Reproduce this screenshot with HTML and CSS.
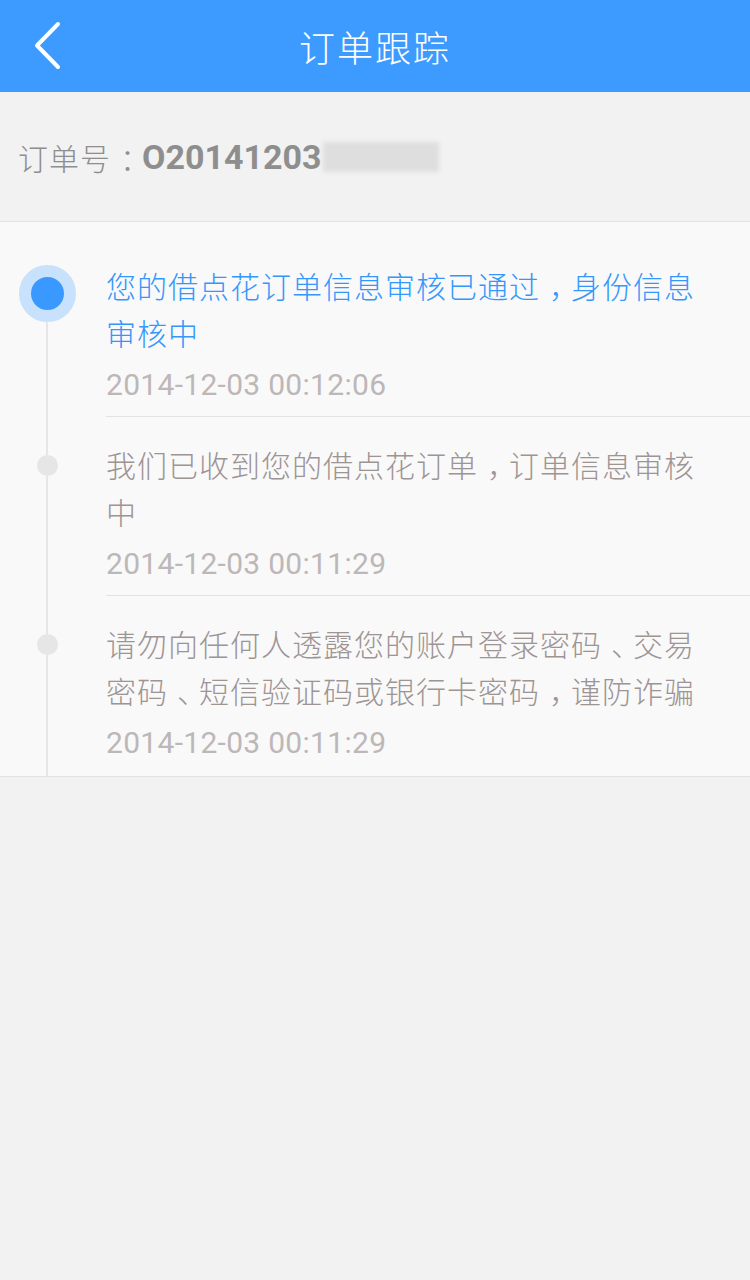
FILE: index.html
```html
<!DOCTYPE html>
<html lang="zh-CN">
<head>
    <meta charset="UTF-8">
    <title>订单跟踪</title>
    <link rel="stylesheet" href="styles.css">
</head>
<body>
    <div class="top-bar">
        <a class="back" href="#">
            <svg width="30" height="50" viewBox="0 0 30 50">
                <path d="M25 3 L4 24.5 L25 46" fill="none" stroke="#fff" stroke-width="4" stroke-linecap="round" stroke-linejoin="round"/>
            </svg>
        </a>
        <h1>订单跟踪</h1>
    </div>

    <div class="order-no">
        <span class="label">订单号<span class="pt">：</span></span><span class="num">O20141203</span><span class="blur"></span>
    </div>

    <div class="track-list">
        <div class="track-item current">
            <div class="gutter"><i class="dot"></i></div>
            <div class="track-body">
                <p class="msg">您的借点花订单信息审核已通过<span class="pt">，</span>身份信息<br>审核中</p>
                <p class="time">2014-12-03 00:12:06</p>
            </div>
        </div>
        <div class="track-item">
            <div class="gutter"><i class="dot"></i></div>
            <div class="track-body">
                <p class="msg">我们已收到您的借点花订单<span class="pt">，</span>订单信息审核<br>中</p>
                <p class="time">2014-12-03 00:11:29</p>
            </div>
        </div>
        <div class="track-item last">
            <div class="gutter"><i class="dot"></i></div>
            <div class="track-body">
                <p class="msg">请勿向任何人透露您的账户登录密码<span class="pt">、</span>交易<br>密码<span class="pt">、</span>短信验证码或银行卡密码<span class="pt">，</span>谨防诈骗</p>
                <p class="time">2014-12-03 00:11:29</p>
            </div>
        </div>
    </div>
</body>
</html>
```

FILE: styles.css
```css
body {
    margin: 0;
    background: #f2f2f2;
    font-family: Roboto, "Noto Sans CJK SC", sans-serif;
}

/* 全角标点：半宽字形 + 左右留白，看起来居中 */
.pt {
    font-feature-settings: "halt";
    padding: 0 6px 0 9px;
}

.top-bar {
    height: 92px;
    background: #3d9bff;
    display: flex;
    align-items: center;
    justify-content: center;
    position: relative;
}

.top-bar h1 {
    margin: 0;
    color: #fff;
    font-size: 36px;
    font-weight: 300;
    letter-spacing: 2px;
}

.back {
    position: absolute;
    left: 33px;
    top: 21px;
    display: block;
    width: 30px;
    height: 50px;
}

.order-no {
    height: 129px;
    display: flex;
    align-items: center;
    padding-left: 18px;
    border-bottom: 1px solid #e2e2e2;
    color: #8e8e8e;
    white-space: nowrap;
}

.order-no .label {
    font-size: 30px;
    font-weight: 300;
    letter-spacing: 1px;
    flex-shrink: 0;
}

.order-no .num {
    font-size: 34px;
    font-weight: bold;
}

.order-no .blur {
    display: inline-block;
    width: 116px;
    height: 30px;
    margin-left: 1px;
    background: #dedede;
    filter: blur(2px);
}

.track-list {
    background: #f9f9f9;
    border-bottom: 1px solid #e2e2e2;
}

.track-item {
    display: flex;
}

.gutter {
    width: 94px;
    flex-shrink: 0;
    display: flex;
    flex-direction: column;
    align-items: center;
}

.gutter::before,
.gutter::after {
    content: "";
    width: 2px;
    background: #e6e6e6;
}

.gutter::before {
    height: 38px;
}

.gutter::after {
    flex: 1;
}

.current .gutter::before {
    height: 43px;
    background: transparent;
}

.dot {
    width: 21px;
    height: 21px;
    border-radius: 50%;
    background: #e6e6e6;
}

.current .dot {
    width: 33px;
    height: 33px;
    border: 12px solid #c8e1fd;
    background: #3a99ff;
}

.track-body {
    flex: 1;
    margin-left: 12px;
    padding: 26px 20px 11px 0;
    border-bottom: 1px solid #e2e2e2;
}

.current .track-body {
    padding-top: 42px;
}

.last .track-body {
    padding-bottom: 13px;
    border-bottom: none;
}

.msg {
    margin: 0;
    font-size: 30px;
    font-weight: 300;
    line-height: 47px;
    letter-spacing: 1px;
    color: #9d9494;
    white-space: nowrap;
}

.current .msg {
    color: #3597fb;
}

.time {
    margin: 7px 0 0;
    font-size: 30px;
    line-height: 40px;
    letter-spacing: 0.3px;
    color: #bdb7b7;
}
```
